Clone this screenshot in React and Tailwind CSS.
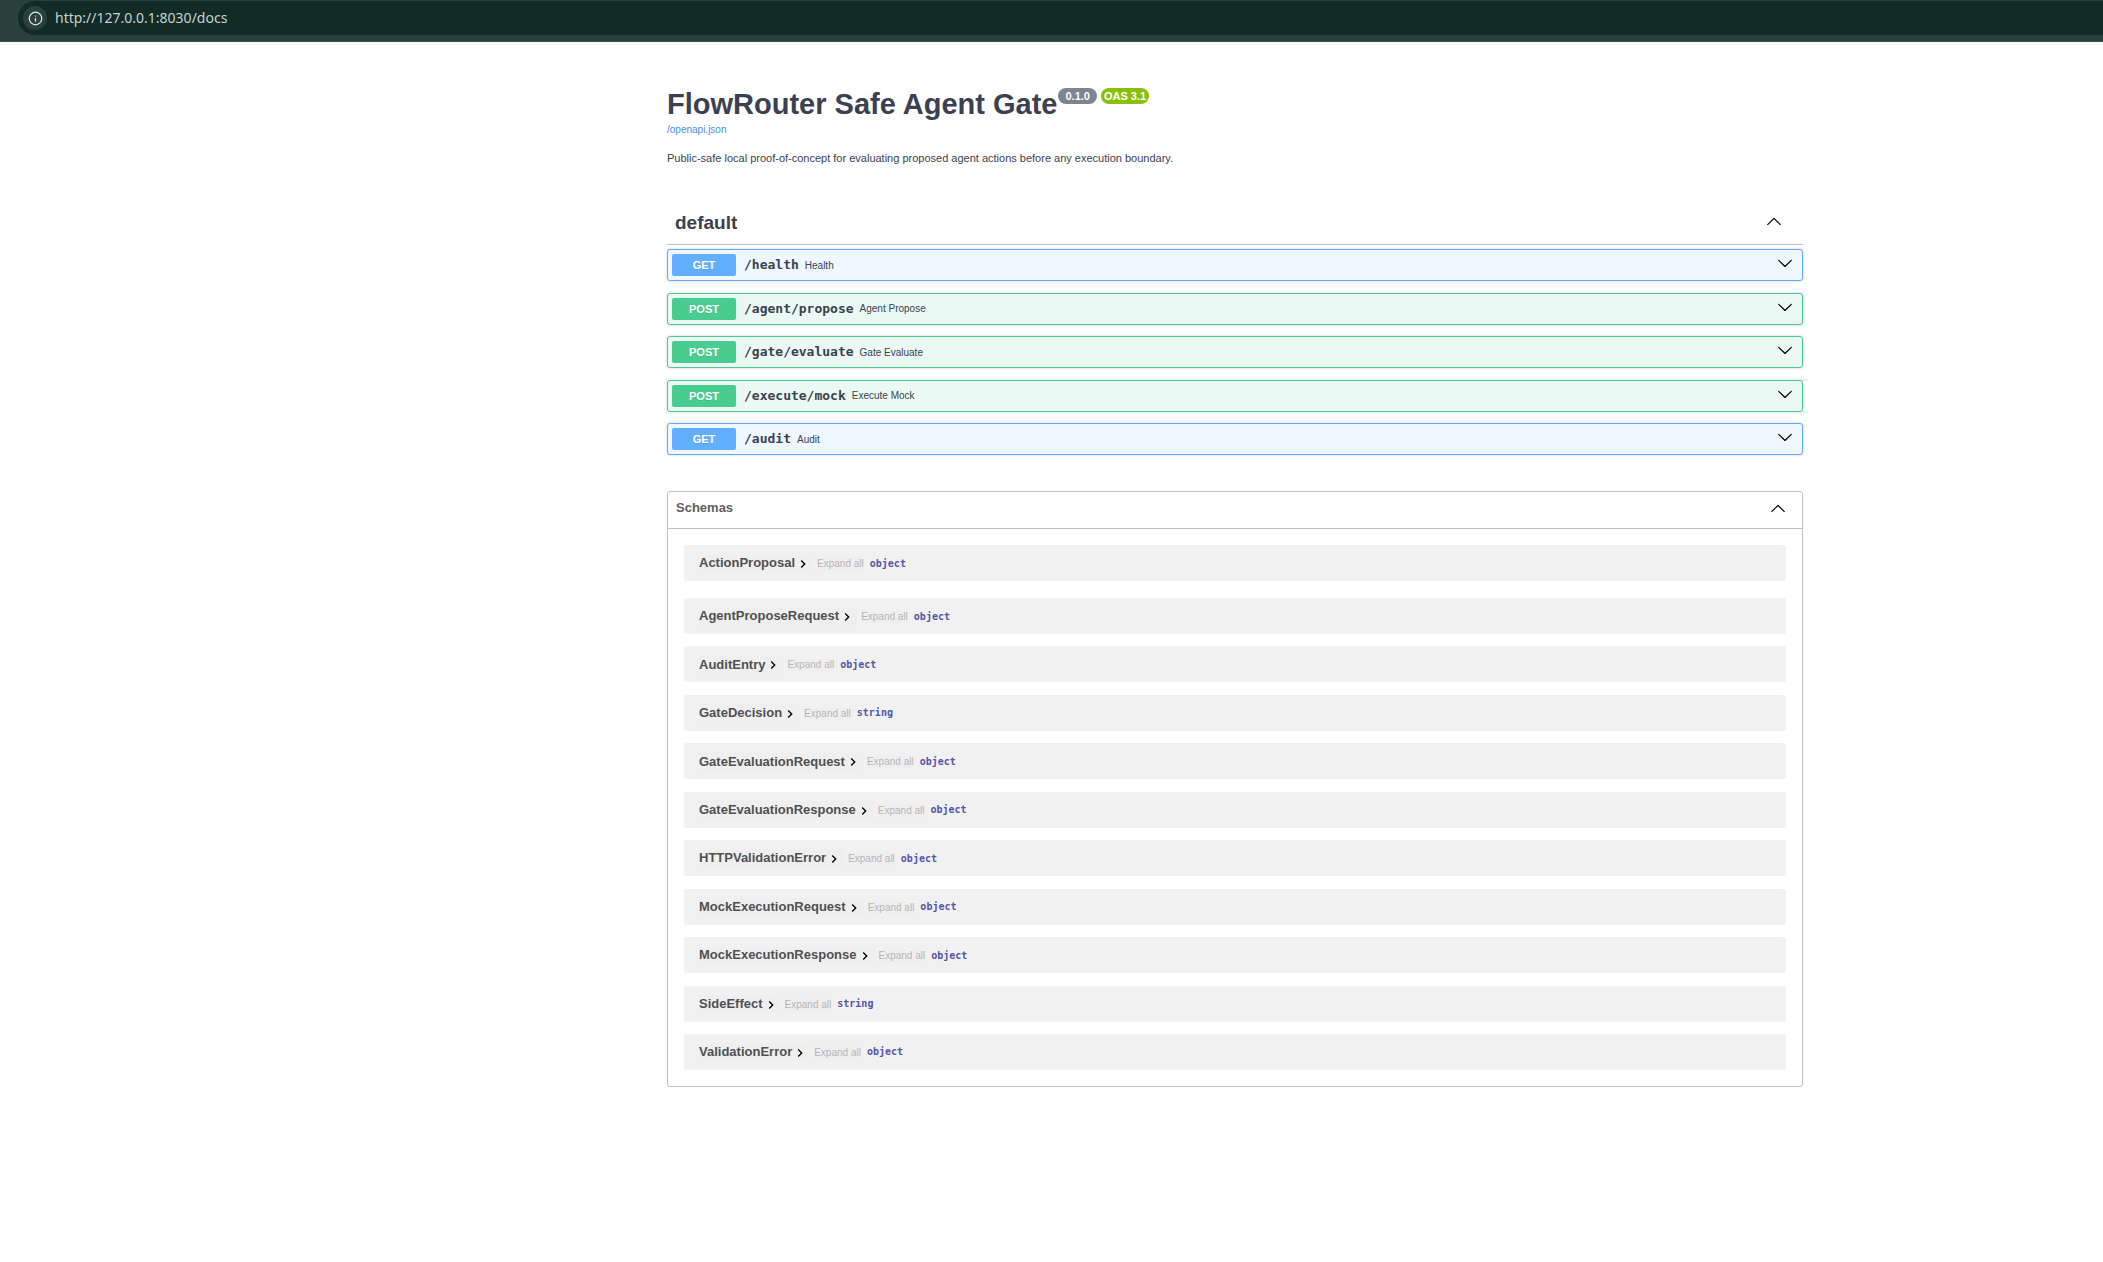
import { useState } from 'react';
import { Info } from 'lucide-react';

const operations = [
    { method: 'GET', path: '/health', summary: 'Health' },
    { method: 'POST', path: '/agent/propose', summary: 'Agent Propose' },
    { method: 'POST', path: '/gate/evaluate', summary: 'Gate Evaluate' },
    { method: 'POST', path: '/execute/mock', summary: 'Execute Mock' },
    { method: 'GET', path: '/audit', summary: 'Audit' },
];

const schemas = [
    { name: 'ActionProposal', type: 'object' },
    { name: 'AgentProposeRequest', type: 'object' },
    { name: 'AuditEntry', type: 'object' },
    { name: 'GateDecision', type: 'string' },
    { name: 'GateEvaluationRequest', type: 'object' },
    { name: 'GateEvaluationResponse', type: 'object' },
    { name: 'HTTPValidationError', type: 'object' },
    { name: 'MockExecutionRequest', type: 'object' },
    { name: 'MockExecutionResponse', type: 'object' },
    { name: 'SideEffect', type: 'string' },
    { name: 'ValidationError', type: 'object' },
];

const methodStyles = {
    GET: { row: 'border-[#61affe] bg-[#eff7ff]', badge: 'bg-[#61affe]' },
    POST: { row: 'border-[#49cc90] bg-[#eaf9f3]', badge: 'bg-[#49cc90]' },
};

function ArrowUp() {
    return (
        <svg className="h-4 w-4 shrink-0" viewBox="0 0 20 20" fill="currentColor" aria-hidden="true">
            <path d="M17.418 14.908c.272.268.709.268.979 0s.271-.701 0-.969l-7.908-7.83c-.27-.268-.707-.268-.979 0l-7.908 7.83c-.27.268-.27.701 0 .969s.709.268.979 0L10 7.767z" />
        </svg>
    );
}

function ArrowDown() {
    return (
        <svg className="h-4 w-4 shrink-0" viewBox="0 0 20 20" fill="currentColor" aria-hidden="true">
            <path d="M17.418 6.109c.272-.268.709-.268.979 0s.271.701 0 .969l-7.908 7.83c-.27.268-.707.268-.979 0l-7.908-7.83c-.27-.268-.27-.701 0-.969s.709-.268.979 0L10 13.25z" />
        </svg>
    );
}

function AddressBar() {
    const [url, setUrl] = useState('http://127.0.0.1:8030/docs');

    return (
        <header className="border-b border-[#3d524e] bg-[#2a403c] pt-px pb-1.5 pl-[18px]">
            <div className="flex h-[34px] items-center gap-2 rounded-l-full bg-[#112b27] pl-[5px]">
                <button
                    type="button"
                    aria-label="Site information"
                    className="flex h-6 w-6 items-center justify-center rounded-full bg-[#2a403c] text-[#e3e9e7]"
                >
                    <Info className="h-[15px] w-[15px]" strokeWidth={2} />
                </button>
                <input
                    type="text"
                    aria-label="Address"
                    value={url}
                    onChange={(e) => setUrl(e.target.value)}
                    className="min-w-0 flex-1 bg-transparent pb-0.5 font-['Noto_Sans',sans-serif] text-[14px] text-[#c6d0ce] outline-none"
                />
            </div>
        </header>
    );
}

function Operation({ method, path, summary }) {
    const style = methodStyles[method];

    return (
        <li>
            <button
                type="button"
                className={`flex h-8 w-full items-center rounded-[3px] border pr-[9px] pl-1 text-left shadow-[0_0_3px_rgba(0,0,0,0.19)] ${style.row}`}
            >
                <span
                    className={`w-16 rounded-[2px] text-center text-[11px] leading-[22px] font-bold text-white [text-shadow:0_1px_0_rgba(0,0,0,0.1)] ${style.badge}`}
                >
                    {method}
                </span>
                <span className="ml-2 font-['DejaVu_Sans_Mono',monospace] text-[13px] font-bold">{path}</span>
                <span className="ml-1.5 flex-1 text-[10px]">{summary}</span>
                <span className="pb-1 text-black">
                    <ArrowDown />
                </span>
            </button>
        </li>
    );
}

function SchemaRow({ name, type }) {
    return (
        <div className="flex h-9 items-center rounded-[3px] bg-[#f1f1f1] px-[15px]">
            <button type="button" className="flex h-[17px] items-center bg-[#efefef] pr-0.5 text-[13px] font-bold text-[#505050]">
                {name}
                <svg className="mt-0.5 h-4 w-4 text-black" viewBox="0 0 24 24" fill="currentColor" aria-hidden="true">
                    <path d="M10 6L8.59 7.41 13.17 12l-4.58 4.59L10 18l6-6z" />
                </svg>
            </button>
            <button type="button" className="mt-0.5 ml-1 bg-[#efefef] text-[10px] leading-3 text-[#b5b5b5]">
                Expand all
            </button>
            <span className="ml-1.5 font-['DejaVu_Sans_Mono',monospace] text-[10px] font-bold text-[#5555aa]">{type}</span>
        </div>
    );
}

function App() {
    const [first, ...rest] = schemas;

    return (
        <div className="min-h-screen bg-white font-['Liberation_Sans',Arial,sans-serif] text-[#3b4151]">
            <AddressBar />

            <main className="ml-[651px] max-w-[1168px] px-4 pt-11">
                {/* Title block */}
                <div className="flex items-start">
                    <h1 className="text-[29px] leading-9 font-bold">FlowRouter Safe Agent Gate</h1>
                    <div className="ml-px flex gap-1 pt-0.5 text-[11px] leading-4 font-bold text-white">
                        <span className="rounded-full bg-[#7d8492] px-[7px]">0.1.0</span>
                        <span className="rounded-full bg-[#89bf04] px-[3px]">OAS 3.1</span>
                    </div>
                </div>
                <a href="/openapi.json" className="mt-0.5 block w-fit text-[10px] leading-3 text-[#4990e2]">
                    /openapi.json
                </a>
                <p className="mt-3.5 text-[11px] leading-4">
                    Public-safe local proof-of-concept for evaluating proposed agent actions before any execution boundary.
                </p>

                {/* Operations */}
                <section className="mt-10">
                    <h2 className="border-b border-[#bfc0c4] pb-1">
                        <button type="button" className="flex h-[34px] w-full items-center justify-between pr-[21px] pl-2 text-[19px] font-bold">
                            default
                            <span className="pb-1 text-black">
                                <ArrowUp />
                            </span>
                        </button>
                    </h2>
                    <ul className="mt-1 grid min-h-[206px] content-between">
                        {operations.map((op) => (
                            <Operation key={op.path} {...op} />
                        ))}
                    </ul>
                </section>

                {/* Schemas */}
                <section className="mt-9 mb-10 rounded-[3px] border border-[#bfc0c4]">
                    <h2 className="border-b border-[#bfc0c4]">
                        <button
                            type="button"
                            className="flex h-9 w-full items-center justify-between pr-4 pb-1 pl-2 text-[13px] font-bold text-[#606060]"
                        >
                            Schemas
                            <span className="text-black">
                                <ArrowUp />
                            </span>
                        </button>
                    </h2>
                    <div className="p-4">
                        <SchemaRow {...first} />
                        <div className="mt-[17px] grid min-h-[472px] content-between">
                            {rest.map((schema) => (
                                <SchemaRow key={schema.name} {...schema} />
                            ))}
                        </div>
                    </div>
                </section>
            </main>
        </div>
    );
}

export default App;
